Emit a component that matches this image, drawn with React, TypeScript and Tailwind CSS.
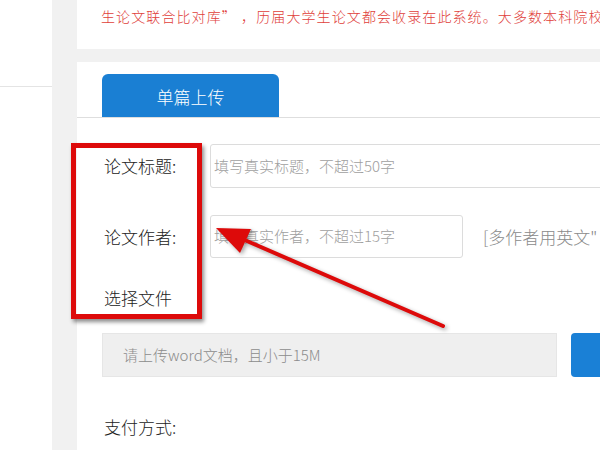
import React from "react"

const font = { fontFamily: '"Microsoft YaHei", "Noto Sans CJK SC", "Noto Sans", sans-serif' }

const FormLabel: React.FC<{ text: string }> = ({ text }) => (
	<div className="w-[108px] shrink-0 pl-[2px] text-[17px] font-light text-[#222]">{text}</div>
)

// red annotation arrow pointing at the author input
const Arrow: React.FC = () => (
	<svg
		className="absolute left-0 top-0 pointer-events-none"
		width={600}
		height={450}
		style={{ filter: "drop-shadow(2px 2px 2px rgba(0,0,0,0.35))" }}
	>
		<line x1={443} y1={326} x2={240} y2={238} stroke="#dd0a0a" strokeWidth={4} strokeLinecap="round" />
		<polygon points="216,228 251,229 240,253" fill="#dd0a0a" />
	</svg>
)

export default function App() {
	return (
		<div className="relative w-[600px] h-[450px] overflow-hidden flex bg-[#f1f1f1]" style={font}>
			{/* side panel */}
			<div className="w-[52px] shrink-0 bg-white">
				<div className="h-[87px] border-b border-[#e4e4e4]" />
			</div>

			<div className="ml-[25px] flex-1 min-w-0 flex flex-col">
				{/* notice card */}
				<div className="h-[49px] bg-white pl-[24px] pt-[3px] whitespace-nowrap overflow-hidden">
					<span className="text-[14px] font-light text-[#e0403a] tracking-[1.1px]">
						生论文联合比对库” ，历届大学生论文都会收录在此系统。大多数本科院校
					</span>
				</div>

				{/* upload card */}
				<div className="mt-[13px] flex-1 bg-white">
					<div className="pt-[12px] pl-[25px] border-b border-[#dedede]">
						<div className="w-[177px] h-[43px] rounded-t-[6px] bg-[#1a7fd3] flex items-center justify-center pt-[2px] text-white text-[17px] font-light">
							单篇上传
						</div>
					</div>

					<div className="pl-[25px]">
						<div className="mt-[26px] flex items-center h-[44px] whitespace-nowrap">
							<FormLabel text="论文标题:" />
							<div className="w-[420px] shrink-0 h-[44px] border border-[#dcdcdc] rounded-[3px] flex items-center pl-[3px] text-[15px] font-light text-[#a0a0a0]">
								填写真实标题，不超过50字
							</div>
						</div>

						<div className="mt-[27px] flex items-center h-[43px] whitespace-nowrap">
							<FormLabel text="论文作者:" />
							<div className="w-[253px] shrink-0 h-[43px] border border-[#dcdcdc] rounded-[3px] flex items-center pl-[3px] text-[15px] font-light text-[#a0a0a0]">
								填写真实作者，不超过15字
							</div>
							<span className="ml-[20px] text-[17px] font-light text-[#8a8a8a]">[多作者用英文"</span>
						</div>

						<div className="mt-[29px] h-[22px] flex items-center">
							<FormLabel text="选择文件" />
						</div>

						<div className="mt-[24px] flex h-[44px] whitespace-nowrap">
							<div className="w-[455px] shrink-0 bg-[#efefef] border border-[#e6e6e6] flex items-center pl-[20px] text-[15px] font-light text-[#8c8c8c]">
								请上传word文档，且小于15M
							</div>
							<div className="ml-[14px] w-[120px] shrink-0 rounded-[4px] bg-[#1a80d6]" />
						</div>

						<div className="mt-[39px] flex items-center h-[22px]">
							<FormLabel text="支付方式:" />
						</div>
					</div>
				</div>
			</div>

			{/* annotation box around the labels */}
			<div className="absolute left-[71px] top-[143px] w-[131px] h-[176px] border-[5px] border-[#dd0a0a] shadow-[2px_3px_4px_rgba(0,0,0,0.45)]" />
			<Arrow />
		</div>
	)
}
